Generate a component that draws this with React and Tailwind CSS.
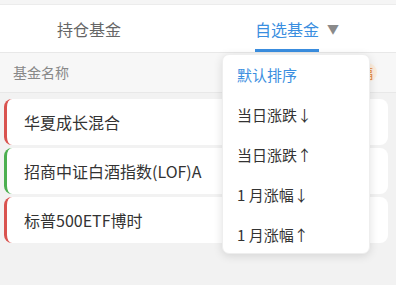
import React from "react";

const funds = [
  { name: "华夏成长混合", color: "border-l-[#d9534f]" },
  { name: "招商中证白酒指数(LOF)A", color: "border-l-[#4caf50]" },
  { name: "标普500ETF博时", color: "border-l-[#d9534f]" },
];

const items = ["当日涨跌↓", "当日涨跌↑", "1 月涨幅↓", "1 月涨幅↑"];

export default function App() {
  return (
    <div
      className="relative w-[396px] h-[285px] overflow-hidden bg-[#f2f2f2]"
      style={{ fontFamily: '"Noto Sans CJK SC", "Noto Sans", sans-serif' }}
    >
      <div className="h-[5px] bg-[#f5f5f5] border-b border-[#ececec]" />
      <div className="flex h-[48px] bg-white border-b border-[#e8e8e8]">
        <div className="flex-1 flex justify-center">
          <div className="flex items-center">
            <span className="text-[16px] text-[#666] leading-none">持仓基金</span>
            <span className="invisible ml-[8px] text-[12px]">▼</span>
          </div>
        </div>
        <div className="flex-1 flex justify-center">
          <div className="flex items-center">
            <div className="relative h-full flex items-center">
              <span className="text-[16px] text-[#3a8ee0] leading-none">自选基金</span>
              <div className="absolute left-0 right-0 bottom-0 h-[3px] bg-[#3a8ee0]" />
            </div>
            <span className="ml-[8px] text-[12px] text-[#8a8a8a]">▼</span>
          </div>
        </div>
      </div>
      <div className="h-[40px] flex items-center justify-between pl-[13px] pr-[19px] bg-[#f7f7f7] border-b border-[#e8e8e8]">
        <span className="text-[14px] text-[#888]">基金名称</span>
        <span className="text-[13px] text-[#e8893c] bg-[#fdeedd] rounded-full px-[4px]">近1月涨幅</span>
      </div>
      <div className="flex flex-col gap-[3px] px-[4px] pt-[6px] pr-[8px]">
        {funds.map((f) => (
          <div
            key={f.name}
            className={`h-[46px] flex items-center bg-white rounded-[8px] border-l-[3px] ${f.color} pl-[17px]`}
          >
            <span className="text-[16px] text-[#333]">{f.name}</span>
          </div>
        ))}
      </div>
      <div className="absolute left-[222px] top-[54px] w-[148px] h-[200px] bg-white rounded-[7px] shadow-[0_2px_10px_rgba(0,0,0,0.12)] border border-[#eeeeee]">
        <div className="h-[40px] flex items-center pl-[14px] text-[15px] text-[#3a8ee0]">默认排序</div>
        {items.map((t) => (
          <div key={t} className="h-[40px] flex items-center pl-[14px] text-[15px] text-[#333]">
            {t}
          </div>
        ))}
      </div>
    </div>
  );
}
